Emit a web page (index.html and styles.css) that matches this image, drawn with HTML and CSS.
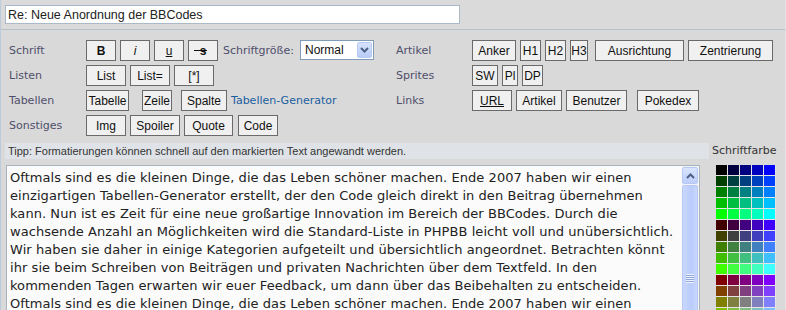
FILE: index.html
```html
<!DOCTYPE html>
<html lang="de">
<head>
    <meta charset="UTF-8">
    <title>Beitrag schreiben</title>
    <link rel="stylesheet" href="styles.css">
</head>
<body>
    <div class="page">
        <div class="subject">
            <input class="subject-input" type="text" value="Re: Neue Anordnung der BBCodes">
        </div>

        <div class="toolbar">
            <div class="group group-left">
                <div class="row">
                    <span class="label">Schrift</span>
                    <button class="btn w30"><b>B</b></button>
                    <button class="btn w30"><i>i</i></button>
                    <button class="btn w30"><u>u</u></button>
                    <button class="btn w30"><span class="strike">s</span></button>
                    <span class="size-label">Schriftgröße:</span>
                    <div class="select">
                        <span class="select-value">Normal</span>
                        <span class="select-arrow">
                            <svg width="9" height="6" viewBox="0 0 9 6"><path d="M1 1 L4.5 4.5 L8 1" fill="none" stroke="#4d6185" stroke-width="2"/></svg>
                        </span>
                    </div>
                </div>
                <div class="row">
                    <span class="label">Listen</span>
                    <button class="btn w40">List</button>
                    <button class="btn w40">List=</button>
                    <button class="btn w40">[*]</button>
                </div>
                <div class="row">
                    <span class="label">Tabellen</span>
                    <button class="btn w43 mr13">Tabelle</button>
                    <button class="btn w30 mr9">Zeile</button>
                    <button class="btn w46">Spalte</button>
                    <a class="gen-link" href="#">Tabellen-Generator</a>
                </div>
                <div class="row">
                    <span class="label">Sonstiges</span>
                    <button class="btn w40">Img</button>
                    <button class="btn w50">Spoiler</button>
                    <button class="btn w49 mr5">Quote</button>
                    <button class="btn w40">Code</button>
                </div>
            </div>

            <div class="group group-right">
                <div class="row">
                    <span class="label">Artikel</span>
                    <button class="btn w44">Anker</button>
                    <button class="btn w21">H1</button>
                    <button class="btn w21">H2</button>
                    <button class="btn w18 mr7">H3</button>
                    <button class="btn w89">Ausrichtung</button>
                    <button class="btn w85">Zentrierung</button>
                </div>
                <div class="row">
                    <span class="label">Sprites</span>
                    <button class="btn w26">SW</button>
                    <button class="btn w16">Pl</button>
                    <button class="btn w21">DP</button>
                </div>
                <div class="row">
                    <span class="label">Links</span>
                    <button class="btn w40"><u>URL</u></button>
                    <button class="btn w46">Artikel</button>
                    <button class="btn w61 mr10">Benutzer</button>
                    <button class="btn w62">Pokedex</button>
                </div>
            </div>
        </div>

        <div class="editor">
            <div class="main">
                <div class="tip">Tipp: Formatierungen können schnell auf den markierten Text angewandt werden.</div>
                <div class="textbox">
                    <div class="text">
                        <div>Oftmals sind es die kleinen Dinge, die das Leben schöner machen. Ende 2007 haben wir einen</div>
                        <div>einzigartigen Tabellen-Generator erstellt, der den Code gleich direkt in den Beitrag übernehmen</div>
                        <div>kann. Nun ist es Zeit für eine neue großartige Innovation im Bereich der BBCodes. Durch die</div>
                        <div>wachsende Anzahl an Möglichkeiten wird die Standard-Liste in PHPBB leicht voll und unübersichtlich.</div>
                        <div>Wir haben sie daher in einige Kategorien aufgeteilt und übersichtlich angeordnet. Betrachten könnt</div>
                        <div>ihr sie beim Schreiben von Beiträgen und privaten Nachrichten über dem Textfeld. In den</div>
                        <div>kommenden Tagen erwarten wir euer Feedback, um dann über das Beibehalten zu entscheiden.</div>
                        <div>Oftmals sind es die kleinen Dinge, die das Leben schöner machen. Ende 2007 haben wir einen</div>
                    </div>
                    <div class="scrollbar">
                        <div class="scroll-up">
                            <svg width="9" height="6" viewBox="0 0 9 6"><path d="M1 5 L4.5 1.5 L8 5" fill="none" stroke="#4d6185" stroke-width="2"/></svg>
                        </div>
                        <div class="scroll-thumb">
                            <span class="grip"></span>
                        </div>
                    </div>
                </div>
            </div>
            <div class="colors">
                <div class="colors-title">Schriftfarbe</div>
                <div class="palette" id="palette"></div>
            </div>
        </div>
    </div>

    <script>
        // phpBB Farbpalette
        const steps = ['00', '40', '80', 'BF', 'FF'];
        const palette = document.getElementById('palette');

        steps.forEach(r => {
            steps.forEach(g => {
                steps.forEach(b => {
                    const cell = document.createElement('span');
                    cell.className = 'swatch';
                    cell.style.backgroundColor = '#' + r + g + b;
                    palette.appendChild(cell);
                });
            });
        });
    </script>
</body>
</html>
```

FILE: styles.css
```css
/* Allgemein */
html, body {
    margin: 0;
    padding: 0;
    height: 310px;
    overflow: hidden;
}

body {
    background-color: #d9d9d9;
    font-family: "DejaVu Sans", Verdana, sans-serif;
    font-size: 11px;
    color: #4f4f6b;
}

.page {
    border-left: 1px solid #bccbdb;
    border-right: 1px solid #e2e2e2;
    height: 310px;
    box-sizing: border-box;
    overflow: hidden;
}

/* Betreff */
.subject {
    padding: 5px 0 5px 4px;
    border-bottom: 1px solid #b6c0ca;
    background-color: #dadada;
}

.subject-input {
    display: block;
    width: 455px;
    height: 19px;
    box-sizing: border-box;
    margin: 0;
    padding: 0 2px;
    border: 1px solid #a9b9ca;
    background-color: #fff;
    font-family: "Liberation Sans", Arial, sans-serif;
    font-size: 12.5px;
    color: #222;
}

/* Werkzeugleiste */
.toolbar {
    display: flex;
    padding: 10px 0 0 8px;
}

.group-left {
    width: 387px;
}

.row {
    display: flex;
    align-items: center;
    height: 21px;
    margin-bottom: 4px;
}

.label {
    width: 77px;
    flex: none;
}

.group-right .label {
    width: 76px;
}

.btn {
    height: 21px;
    box-sizing: border-box;
    margin: 0 4px 0 0;
    padding: 0;
    border: 1px solid #6a6a6a;
    background-color: #f0f0f0;
    font-family: "Liberation Sans", Arial, sans-serif;
    font-size: 12px;
    color: #111;
    text-align: center;
    flex: none;
    cursor: pointer;
}

.w16 { width: 16px; }
.w18 { width: 18px; }
.w21 { width: 21px; }
.w26 { width: 26px; }
.w30 { width: 30px; }
.w40 { width: 40px; }
.w43 { width: 43px; }
.w44 { width: 44px; }
.w46 { width: 46px; }
.w49 { width: 49px; }
.w50 { width: 50px; }
.w61 { width: 61px; }
.w62 { width: 62px; }
.w85 { width: 85px; }
.w89 { width: 89px; }

.mr5 { margin-right: 5px; }
.mr7 { margin-right: 7px; }
.mr9 { margin-right: 9px; }
.mr10 { margin-right: 10px; }
.mr13 { margin-right: 13px; }

.strike {
    position: relative;
    font-weight: bold;
}

.strike::before {
    content: "";
    position: absolute;
    left: -6px;
    right: -1px;
    top: 6px;
    border-top: 1px solid #111;
}

.size-label {
    margin: 0 6px 0 1px;
    font-size: 11px;
}

.select {
    display: flex;
    align-items: center;
    width: 74px;
    height: 20px;
    box-sizing: border-box;
    border: 1px solid #7f9db9;
    background-color: #fff;
    padding: 1px;
    margin-top: -1px;
}

.select-value {
    flex: 1;
    padding-left: 3px;
    font-family: "Liberation Sans", Arial, sans-serif;
    font-size: 12px;
    color: #111;
}

.select-arrow {
    display: flex;
    align-items: center;
    justify-content: center;
    width: 15px;
    height: 16px;
    border: 1px solid #b8cbf3;
    border-radius: 2px;
    background: linear-gradient(#d6e2fd, #b8cbf7);
    box-sizing: border-box;
}

.gen-link {
    color: #1b5f9f;
    text-decoration: none;
    font-size: 11px;
}

/* Editor */
.editor {
    display: flex;
    padding: 3px 0 0 4px;
    height: 173px;
    overflow: hidden;
}

.main {
    width: 704px;
}

.tip {
    height: 16px;
    line-height: 16px;
    padding-left: 3px;
    background-color: #dfe3e7;
    font-family: "Liberation Sans", Arial, sans-serif;
    font-size: 11px;
    color: #333;
}

.textbox {
    display: flex;
    width: 694px;
    height: 160px;
    margin: 6px 0 0 1px;
    box-sizing: border-box;
    border: 1px solid #a9b3bd;
    background-color: #fbfbfb;
}

.text {
    flex: 1;
    padding: 3px 0 0 3px;
    font-size: 13px;
    letter-spacing: 0.06px;
    line-height: 18px;
    color: #222;
    white-space: nowrap;
    overflow: hidden;
}

.scrollbar {
    width: 16px;
    padding: 1px 1px 0 0;
    background-color: #f4f4f4;
    display: flex;
    flex-direction: column;
    gap: 1px;
}

.scroll-up {
    height: 15px;
    display: flex;
    align-items: center;
    justify-content: center;
    border: 1px solid #b7c8f4;
    border-radius: 2px;
    background: linear-gradient(#d9e4fe, #bccefa);
}

.scroll-thumb {
    flex: 1;
    position: relative;
    border: 1px solid #b7c8f4;
    border-radius: 2px;
    background: linear-gradient(90deg, #c9d7fd, #b9ccfb 60%, #c9d7fd);
}

.grip {
    position: absolute;
    left: 3px;
    top: 88px;
    width: 8px;
    height: 9px;
    background: repeating-linear-gradient(#eef3ff 0, #eef3ff 1px, #8ea6dc 1px, #8ea6dc 2px);
}

/* Farbpalette */
.colors {
    padding-left: 3px;
}

.colors-title {
    height: 16px;
    line-height: 16px;
    color: #333;
}

.palette {
    display: grid;
    grid-template-columns: repeat(5, 11px);
    grid-auto-rows: 10px;
    gap: 1px;
    margin: 6px 0 0 4px;
    background-color: #e4e4e4;
}

.swatch {
    display: block;
}
```
